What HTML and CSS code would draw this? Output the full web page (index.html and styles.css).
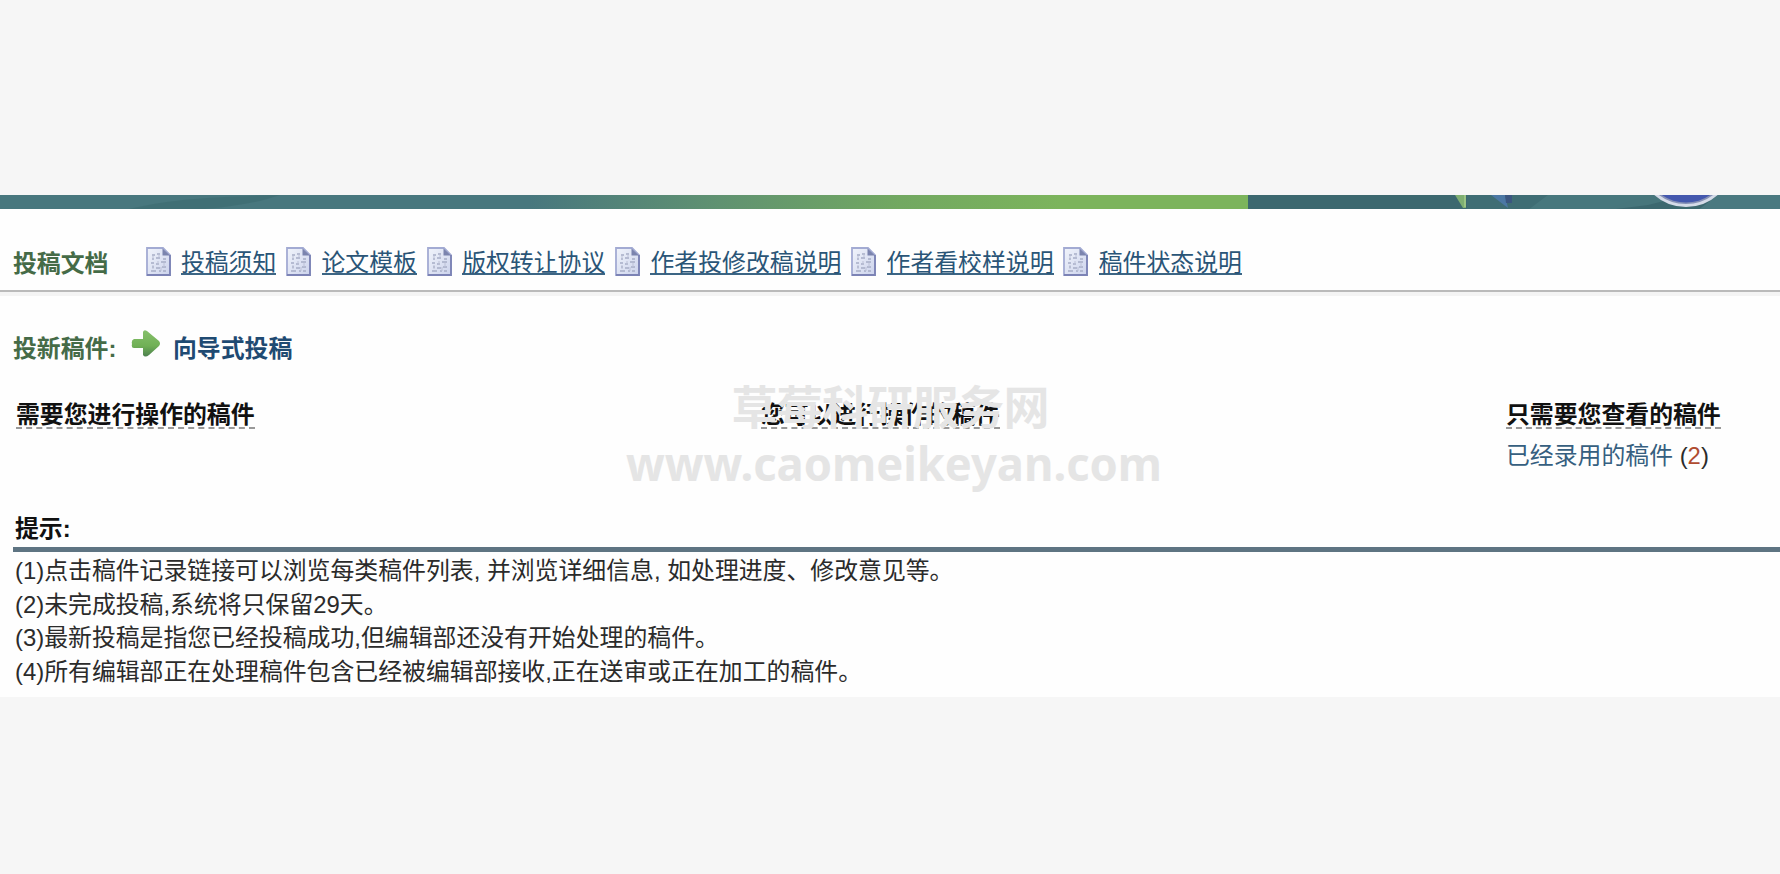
FILE: index.html
```html
<!DOCTYPE html>
<html lang="zh-CN">
<head>
  <meta charset="UTF-8">
  <meta name="viewport" content="width=device-width, initial-scale=1">
  <title>投稿系统</title>
  <link rel="stylesheet" href="styles.css">
</head>
<body>
  <svg class="defs" width="0" height="0">
    <defs>
      <linearGradient id="paper" x1="0" y1="0" x2="1" y2="1">
        <stop offset="0" stop-color="#f1f4fb"/>
        <stop offset="1" stop-color="#ccd3ec"/>
      </linearGradient>
      <linearGradient id="leaf" x1="0" y1="0" x2="0" y2="1">
        <stop offset="0" stop-color="#86c06c"/>
        <stop offset="0.6" stop-color="#70b055"/>
        <stop offset="1" stop-color="#4d8050"/>
      </linearGradient>
      <symbol id="doc" viewBox="0 0 25 29">
        <path d="M1 1H17L24 8V28H1Z" fill="url(#paper)" stroke="#a3abd3" stroke-width="1.8"/>
        <path d="M24 8V28H1" fill="none" stroke="#7c83b5" stroke-width="1.8"/>
        <path d="M16.5 1.5V8.5H24Z" fill="#7b84ae"/>
        <path d="M6 8h3M11 7h3M6 12h2M10 11h4M17 12h3M5 16h3M10 17h3M15 15h5M6 20h2M10 21h4M16 20h4M5 24h5M13 24h2M17 24h3" stroke="#a7adc6" stroke-width="1.3"/>
        <path d="M7 9v4M13 7v3M12 14v4M18 16v4M7 18v4M15 20v4" stroke="#bcc1d6" stroke-width="1"/>
      </symbol>
    </defs>
  </svg>

  <main class="page">
    <div class="banner">
      <div class="banner-left">
        <svg width="280" height="15" viewBox="0 0 280 15"><path d="M125 15C165 5 200 2 280 0C255 9 225 13 190 15Z" fill="#3c6a70" opacity=".6"/></svg>
      </div>
      <svg class="banner-right" width="532" height="15" viewBox="0 0 532 15">
        <rect width="532" height="15" fill="#3c686f"/>
        <path d="M219 0H400L355 15H219Z" fill="#42747a" opacity=".45"/>
        <path d="M300 0H440L400 10L360 15H280Z" fill="#4a7980" opacity=".8"/>
        <path d="M532 0H470L450 15H532Z" fill="#4a7980"/>
        <path d="M207 0H218V13H215Z" fill="#7faf72"/>
        <path d="M217 0V12" stroke="#a5cb8c" stroke-width="1.5"/>
        <path d="M243 0H257L260 13Z" fill="#4c78a4"/>
        <path d="M257 0H264V8H258Z" fill="#3b5680"/>
        <circle cx="438" cy="-36" r="46.5" fill="#8590b6" stroke="#d5dbe8" stroke-width="3"/>
        <ellipse cx="438" cy="-16" rx="33" ry="23.5" fill="#4458ae"/>
      </svg>
    </div>

    <nav class="docs">
      <span class="docs-title">投稿文档</span>
      <a class="doc-link" href="#"><svg class="doc-icon"><use href="#doc"/></svg><span>投稿须知</span></a>
      <a class="doc-link" href="#"><svg class="doc-icon"><use href="#doc"/></svg><span>论文模板</span></a>
      <a class="doc-link" href="#"><svg class="doc-icon"><use href="#doc"/></svg><span>版权转让协议</span></a>
      <a class="doc-link" href="#"><svg class="doc-icon"><use href="#doc"/></svg><span>作者投修改稿说明</span></a>
      <a class="doc-link" href="#"><svg class="doc-icon"><use href="#doc"/></svg><span>作者看校样说明</span></a>
      <a class="doc-link" href="#"><svg class="doc-icon"><use href="#doc"/></svg><span>稿件状态说明</span></a>
    </nav>

    <div class="submit">
      <span class="submit-title">投新稿件:</span>
      <svg class="arrow" width="30" height="28" viewBox="0 0 30 28">
        <path d="M3 10H12V3Q13 0 16 2L28 12Q30 14.5 28 17L18 26Q14 29 12 26V19H3Q0 19 1 15Q0 11 3 10Z" fill="url(#leaf)"/>
      </svg>
      <a class="submit-link" href="#">向导式投稿</a>
    </div>

    <div class="columns">
      <section>
        <h2>需要您进行操作的稿件</h2>
      </section>
      <section>
        <h2>您可以进行操作的稿件</h2>
      </section>
      <section>
        <h2>只需要您查看的稿件</h2>
        <p class="status"><a href="#">已经录用的稿件</a> (<b>2</b>)</p>
      </section>
    </div>

    <section class="tips">
      <h3>提示:</h3>
      <p>(1)点击稿件记录链接可以浏览每类稿件列表, 并浏览详细信息, 如处理进度、修改意见等。</p>
      <p>(2)未完成投稿,系统将只保留29天。</p>
      <p>(3)最新投稿是指您已经投稿成功,但编辑部还没有开始处理的稿件。</p>
      <p>(4)所有编辑部正在处理稿件包含已经被编辑部接收,正在送审或正在加工的稿件。</p>
    </section>
  </main>

  <svg class="watermark" width="540" height="120" viewBox="0 0 540 120">
    <text class="mark-name" x="108.5" y="43.5" textLength="318">草莓科研服务网</text>
    <text class="mark-url" x="3" y="101" textLength="536" lengthAdjust="spacingAndGlyphs">www.caomeikeyan.com</text>
  </svg>
</body>
</html>
```

FILE: styles.css
```css
* {
  box-sizing: border-box;
}
body {
  margin: 0;
  padding-top: 195px;
  height: 874px;
  background: #f6f6f6;
  color: #2b2b2b;
  font-family: "Liberation Sans", "Noto Sans CJK SC", sans-serif;
  font-size: 23.86px;
  overflow: hidden;
}
h2, h3, p {
  margin: 0;
}
.defs {
  position: absolute;
}
.page {
  height: 502px;
  background: #fefefe;
}
.banner {
  display: flex;
  height: 14px;
  overflow: hidden;
}
.banner-left {
  width: 1248px;
  background: linear-gradient(to right, #48777e 0, #48777e 530px, #609271 720px, #72a861 900px, #7cb45c 1060px, #7cb45c 100%);
}
.banner-left svg, .banner-right {
  display: block;
}
.docs {
  display: flex;
  align-items: center;
  height: 83px;
  padding: 23px 0 0 13px;
  border-bottom: 2px solid #bababa;
  box-shadow: 0 4px 0 #f4f4f4;
}
.docs-title {
  width: 132.5px;
  font-weight: bold;
  color: #456b47;
}
.doc-link {
  display: flex;
  align-items: center;
  margin-right: 9.8px;
  color: #2a5577;
  text-decoration: none;
}
.doc-link span {
  height: 27px;
  line-height: 29px;
  border-bottom: 2px solid #3c6584;
}
.doc-icon {
  width: 25px;
  height: 29px;
  margin: 1px 10.4px 0 0;
}
.submit {
  display: flex;
  align-items: center;
  height: 80px;
  padding: 29px 0 0 13px;
  font-weight: bold;
}
.submit-title {
  width: 118px;
  color: #456b47;
}
.arrow {
  margin: -8px 12px 0 0;
}
.submit-link {
  color: #1f4a72;
  text-decoration: none;
}
.columns {
  display: grid;
  grid-template-columns: 745px 745px 1fr;
  height: 139px;
  padding: 26px 0 0 16px;
}
.columns h2 {
  display: inline-block;
  height: 31px;
  font-size: inherit;
  line-height: 33px;
  color: #111;
  border-bottom: 2px dashed #999;
}
.status {
  line-height: 32px;
  margin-top: 11px;
}
.status a {
  color: #365f80;
  text-decoration: none;
}
.status b {
  font-weight: normal;
  color: #b04c30;
}
.tips {
  margin-left: 13px;
}
.tips h3 {
  height: 41px;
  margin-bottom: 2px;
  padding-left: 2px;
  font-size: inherit;
  line-height: 36px;
  color: #111;
  border-bottom: 5px solid #5e7482;
}
.tips p {
  padding-left: 2px;
  line-height: 33.5px;
}
.watermark {
  position: absolute;
  left: 623px;
  top: 380px;
  fill: #e5e5e5;
  overflow: visible;
}
.mark-name {
  font: bold 46px "Noto Sans CJK SC", sans-serif;
}
.mark-url {
  font: bold 47px "Noto Sans", sans-serif;
}
```
